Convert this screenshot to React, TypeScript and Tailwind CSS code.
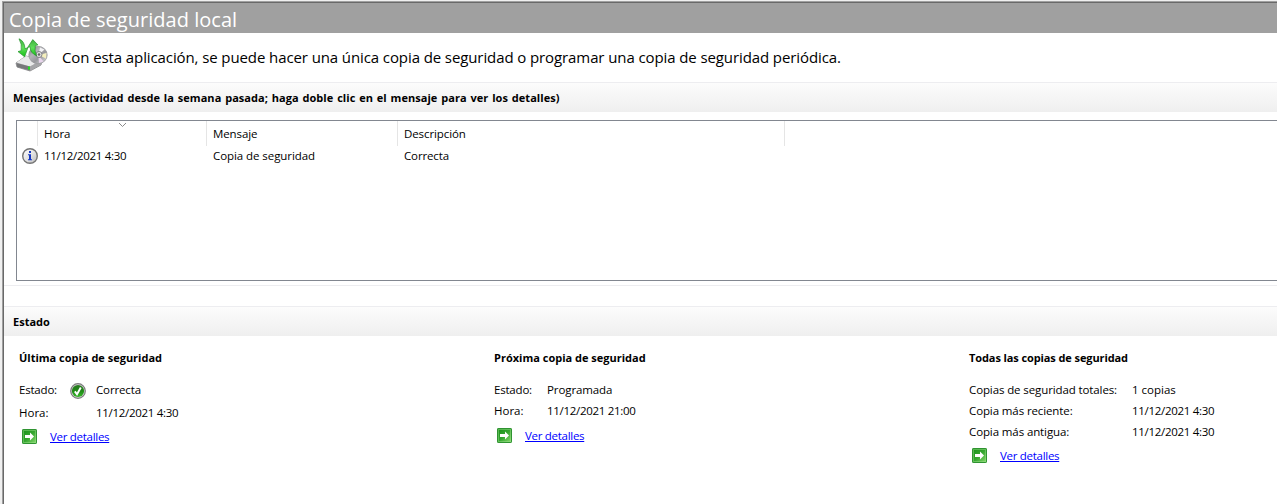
import type { ReactNode } from "react";

function BackupIcon() {
  return (
    <svg width="34" height="34" viewBox="0 0 34 34">
      <defs>
        <linearGradient id="disc" x1="0" y1="0" x2="1" y2="1">
          <stop offset="0" stopColor="#77777c" />
          <stop offset="0.35" stopColor="#b4b4b9" />
          <stop offset="0.6" stopColor="#98989d" />
          <stop offset="1" stopColor="#e4e4e7" />
        </linearGradient>
        <linearGradient id="arrow" x1="0" y1="0" x2="0" y2="1">
          <stop offset="0" stopColor="#3fae3f" />
          <stop offset="0.5" stopColor="#5fe05a" />
          <stop offset="1" stopColor="#14c014" />
        </linearGradient>
      </defs>
      <path d="M1 25 L11 18 L27 22 L26 27 L15 33 L2 29Z" fill="#b4b4b6" stroke="#828284" strokeWidth=".8" />
      <path d="M1.5 24.5 L11 18 L27 22 L15 28.5Z" fill="#e9e9ea" />
      <path d="M1.5 25 L15 28.5 L15 32.5 L2.2 29Z" fill="#77787a" />
      <path d="M15 28.5 L27 22.3 L26.2 26.5 L15 32.5Z" fill="#a5a5a8" />
      <ellipse cx="23" cy="17" rx="9.2" ry="8.7" fill="url(#disc)" stroke="#98989c" strokeWidth=".8" />
      <path d="M23.3 17 L31.5 15 L31 20.5Z" fill="#f4efbd" />
      <path d="M23.3 17 L24 25 L28.5 23.5Z" fill="#e8d5ec" />
      <path d="M23.3 17 L25 9.5 L29.5 11.5Z" fill="#f3f3f5" />
      <circle cx="24" cy="16.5" r="3" fill="#e3e3e4" stroke="#77777c" strokeWidth=".9" />
      <circle cx="24" cy="16.5" r="1.3" fill="#666" />
      <rect x="13" y="28.6" width="2" height="3" fill="#20e020" />
      <path d="M4 .8 Q9.6 3 10 10.8 L12.9 9.6 L9.6 18.8 L3 13.6 L6.2 12.7 Q7.3 6 4 .8Z" fill="url(#arrow)" stroke="#22912a" strokeWidth=".7" />
      <path d="M17.8 1.6 L22.9 6.9 L20.3 7.5 Q19.2 13 21.6 17.8 Q15 15 15.2 8.8 L12.7 9.4Z" fill="url(#arrow)" stroke="#22912a" strokeWidth=".7" />
    </svg>
  );
}

function InfoIcon() {
  return (
    <svg width="16" height="16" viewBox="0 0 16 16">
      <defs>
        <linearGradient id="info" x1="0" y1="0" x2="1" y2="1">
          <stop offset="0" stopColor="#fff" />
          <stop offset="0.5" stopColor="#e4e4e4" />
          <stop offset="1" stopColor="#b8b8b8" />
        </linearGradient>
      </defs>
      <circle cx="8" cy="8" r="7.3" fill="url(#info)" stroke="#747474" strokeWidth="1.4" />
      <path d="M7 3h2v2H7zM7 6.2h2V12H7zM6 6.2h2v1H6zM6 11.2h4v1H6z" fill="#1638c4" />
    </svg>
  );
}

function CheckIcon() {
  return (
    <svg width="16" height="16" viewBox="0 0 16 16">
      <defs>
        <linearGradient id="ok" x1="0" y1="0" x2="0" y2="1">
          <stop offset="0" stopColor="#27761f" />
          <stop offset="0.5" stopColor="#1f8a16" />
          <stop offset="1" stopColor="#35b827" />
        </linearGradient>
      </defs>
      <circle cx="8" cy="8" r="7.3" fill="#d4d4d4" stroke="#7b7b7b" strokeWidth="1.2" />
      <circle cx="8" cy="8" r="6.1" fill="url(#ok)" />
      <path d="M4.8 8.4 L7 11.2 L10.8 4.5" fill="none" stroke="#fff" strokeWidth="1.9" />
    </svg>
  );
}

function ArrowIcon() {
  return (
    <svg width="15" height="15" viewBox="0 0 15 15">
      <defs>
        <linearGradient id="go" x1="0" y1="0" x2="1" y2="1">
          <stop offset="0" stopColor="#189018" />
          <stop offset="0.5" stopColor="#35a52f" />
          <stop offset="1" stopColor="#8cdc70" />
        </linearGradient>
      </defs>
      <rect x=".5" y=".5" width="14" height="14" rx=".6" fill="url(#go)" stroke="#2f9331" />
      <rect x="1.5" y="1.5" width="12" height="12" fill="none" stroke="#9be08b" strokeOpacity=".45" />
      <path d="M3 6h5V3.6L12 7.5 8 11.4V9H3z" fill="#fff" />
    </svg>
  );
}

function SectionBar({ children }: { children: ReactNode }) {
  return (
    <div className="h-[30px] shrink-0 border-t border-[#ededf0] bg-linear-to-b from-[#fcfcfc] to-[#efefef] pl-[9px] text-[11px] leading-[30px] font-bold">
      {children}
    </div>
  );
}

function Details({ className }: { className: string }) {
  return (
    <div className={`flex h-[16px] items-start pl-[3px] ${className}`}>
      <ArrowIcon />
      <a href="#" className="ml-[13px] text-[#0000ff] underline underline-offset-1 tracking-[-0.29px]">
        Ver detalles
      </a>
    </div>
  );
}

export default function App() {
  return (
    <div className="h-[504px] w-[1277px] overflow-hidden bg-[#f0f0f0] pt-px pl-[2px] font-['Open_Sans','Noto_Sans',sans-serif] text-[11.5px] leading-[16px] text-black">
      <div className="h-full border-t border-l border-[#a0a0a0]">
        <div className="flex h-full flex-col border-t border-l border-[#696969] bg-white">
          <header className="h-[30px] shrink-0 bg-[#a0a0a0] pl-[5px] text-[20px] leading-[34px] tracking-[0.02px] whitespace-nowrap text-white">
            Copia de seguridad local
          </header>
          <div className="flex h-[49px] shrink-0 items-start pt-[5px] pl-[11px]">
            <BackupIcon />
            <p className="ml-[13px] pt-[9px] text-[15px] leading-[20px] tracking-[-0.1px] whitespace-nowrap">
              Con esta aplicación, se puede hacer una única copia de seguridad o programar una copia de seguridad periódica.
            </p>
          </div>
          <SectionBar>
            <span className="tracking-[0.05px] [word-spacing:0.9px]">
              Mensajes (actividad desde la semana pasada; haga doble clic en el mensaje para ver los detalles)
            </span>
          </SectionBar>
          <div className="h-[174px] shrink-0 border-b border-[#ededf0] pt-[8px] pl-[12px]">
            <div className="h-[161px] border-y border-l border-[#828790]">
              <div className="flex h-[25px]">
                <div className="w-[21px] border-r border-[#e5e5e5]" />
                <div className="relative w-[169px] border-r border-[#e5e5e5] pt-[5px] pl-[6px]">
                  Hora
                  <svg className="absolute top-px left-[80px]" width="9" height="6" viewBox="0 0 9 6">
                    <path d="M1 1l3.5 3.5L8 1" fill="none" stroke="#8a8a8a" />
                  </svg>
                </div>
                <div className="w-[191px] border-r border-[#e5e5e5] pt-[5px] pl-[6px] tracking-[-0.1px]">Mensaje</div>
                <div className="w-[387px] border-r border-[#e5e5e5] pt-[5px] pl-[6px] tracking-[-0.1px]">Descripción</div>
              </div>
              <div className="flex h-[20px] items-center">
                <div className="w-[27px] pl-[5px]">
                  <InfoIcon />
                </div>
                <div className="w-[169px] tracking-[-0.3px]">11/12/2021 4:30</div>
                <div className="w-[191px] tracking-[-0.07px]">Copia de seguridad</div>
                <div className="tracking-[-0.13px]">Correcta</div>
              </div>
            </div>
          </div>
          <div className="h-[20px] shrink-0" />
          <SectionBar>Estado</SectionBar>
          <div className="flex pt-[14px] pl-[15px] whitespace-nowrap">
            <section className="w-[475px] shrink-0">
              <h2 className="text-[11px] font-bold">Última copia de seguridad</h2>
              <div className="mt-[16px] flex h-[16px] items-center">
                <span className="w-[51px] tracking-[-0.2px]">Estado:</span>
                <span className="pt-px">
                  <CheckIcon />
                </span>
                <span className="ml-[10px] tracking-[-0.13px]">Correcta</span>
              </div>
              <div className="mt-[7px] flex h-[16px] items-center">
                <span className="w-[77px]">Hora:</span>
                <span className="tracking-[-0.3px]">11/12/2021 4:30</span>
              </div>
              <Details className="mt-[8px]" />
            </section>
            <section className="w-[475px] shrink-0">
              <h2 className="text-[11px] font-bold">Próxima copia de seguridad</h2>
              <div className="mt-[16px] flex">
                <span className="w-[53px] tracking-[-0.2px]">Estado:</span>
                <span className="tracking-[-0.1px]">Programada</span>
              </div>
              <div className="mt-[5px] flex">
                <span className="w-[53px]">Hora:</span>
                <span className="tracking-[-0.3px]">11/12/2021 21:00</span>
              </div>
              <Details className="mt-[9px]" />
            </section>
            <section>
              <h2 className="text-[11px] font-bold tracking-[-0.1px]">Todas las copias de seguridad</h2>
              <div className="mt-[16px] grid grid-cols-[163px_auto] gap-y-[5px]">
                <span className="tracking-[-0.11px]">Copias de seguridad totales:</span>
                <span>1 copias</span>
                <span className="tracking-[-0.11px]">Copia más reciente:</span>
                <span className="tracking-[-0.3px]">11/12/2021 4:30</span>
                <span className="tracking-[-0.11px]">Copia más antigua:</span>
                <span className="tracking-[-0.3px]">11/12/2021 4:30</span>
              </div>
              <Details className="mt-[8px]" />
            </section>
          </div>
        </div>
      </div>
    </div>
  );
}
